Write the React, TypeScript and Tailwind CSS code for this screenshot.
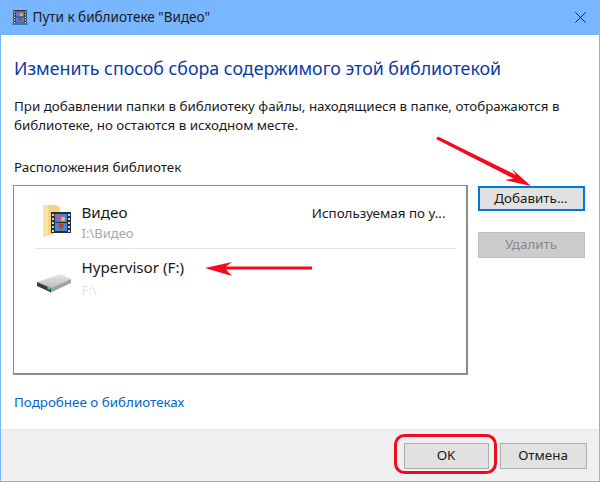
const font = "font-['Noto_Sans','Open_Sans',sans-serif]";

function FilmStrip({ className }: { className: string }) {
  return (
    <svg className={className} viewBox="0 0 20 21">
      <rect width="20" height="21" fill="#2b2e33" />
      <rect x="4" y="2" width="12" height="8" fill="#3f86e6" />
      <rect x="4" y="11" width="12" height="8" fill="#3f86e6" />
      <circle cx="8" cy="5" r="2.5" fill="#d94a86" />
      <circle cx="12" cy="7" r="2.2" fill="#e8c23a" />
      <circle cx="10" cy="14" r="2.6" fill="#c9382f" />
      <circle cx="10" cy="17.5" r="1.5" fill="#4a9e3a" />
      <path d="M1 2h2v2H1zM1 6h2v2H1zM1 10h2v2H1zM1 14h2v2H1zM1 18h2v2H1zM17 2h2v2h-2zM17 6h2v2h-2zM17 10h2v2h-2zM17 14h2v2h-2zM17 18h2v2h-2z" fill="#d8d8d8" />
    </svg>
  );
}

function VideoFolderIcon() {
  return (
    <div className="relative w-[28px] h-[32px]">
      <svg className="absolute left-0 top-0 w-[18px] h-[32px]" viewBox="0 0 18 32">
        <path d="M0 0h13l4 2v6l-6 1v20l-11 3z" fill="#f3d585" />
        <path d="M0 0h5v31l-5 1z" fill="#f8e3a6" />
      </svg>
      <FilmStrip className="absolute left-[8px] top-[7px] w-[20px] h-[21px]" />
    </div>
  );
}

function DriveIcon() {
  return (
    <svg className="w-[34px] h-[19px]" viewBox="0 0 34 19">
      <defs>
        <linearGradient id="driveTop" x1="0" y1="0" x2="0" y2="1">
          <stop offset="0" stopColor="#e6e6e6" />
          <stop offset="1" stopColor="#bdbdbd" />
        </linearGradient>
      </defs>
      <path d="M0 8 L24 0 L34 5 L14 14 Z" fill="url(#driveTop)" />
      <path d="M14 14 L34 5 L34 9 L14 18.5 Z" fill="#a0a0a0" />
      <path d="M0 8 L14 14 L14 18.5 L0 12 Z" fill="#3a3d40" />
      <rect x="10.5" y="13" width="3" height="2.5" fill="#3fd05f" />
    </svg>
  );
}

function Arrows() {
  return (
    <svg className="absolute inset-0 w-[600px] h-[482px] pointer-events-none" viewBox="0 0 600 482">
      <path d="M436 139 L438 136.5 L516 175 L512 169 L531 186 L505 180 L513.5 178.5 Z" fill="#f5091b" />
      <path d="M205 268 L232 262 L226 266.5 L312 266.5 L312 269.5 L226 269.5 L232 276 Z" fill="#f5091b" />
      <rect x="395.5" y="435.5" width="100" height="37" rx="9" fill="none" stroke="#ee0c1f" strokeWidth="3" />
    </svg>
  );
}

export default function App() {
  return (
    <div className={`${font} relative w-[600px] h-[482px] flex flex-col bg-white border-x-[1.5px] border-b-[1.5px] border-[#78b7ff] text-[#1a1a1a] overflow-hidden`}>
      {/* Title bar */}
      <div className="h-[35px] shrink-0 -mx-[1.5px] bg-[#78b7ff] flex items-center pl-[12px] pr-[15px]">
        <div className="relative w-[21px] h-[16px]">
          <FilmStrip className="absolute left-[1px] top-0 w-[14px] h-[14px]" />
          <div className="absolute left-0 top-[13px] w-[16px] h-[2px] rounded-full bg-[#2f78c8]" />
        </div>
        <span className="text-[13.5px]">Пути к библиотеке "Видео"</span>
        <svg className="ml-auto w-[11px] h-[11px]" viewBox="0 0 11 11">
          <path d="M0.3 0.3 L10.7 10.7 M10.7 0.3 L0.3 10.7" stroke="#1a1a2a" strokeWidth="1" />
        </svg>
      </div>

      {/* Content */}
      <div className="flex-1 flex flex-col pl-[11.5px] pr-[12.5px]">
        <h1 className="mt-[21px] ml-[1.5px] h-[24px] leading-[24px] text-[17.8px] text-[#0a3aa6] whitespace-nowrap">
          Изменить способ сбора содержимого этой библиотекой
        </h1>
        <p className="mt-[17px] ml-[1.5px] text-[13.35px] leading-[19px] whitespace-nowrap">
          При добавлении папки в библиотеку файлы, находящиеся в папке, отображаются в<br />
          библиотеке, но остаются в исходном месте.
        </p>
        <div className="mt-[22px] ml-[1.5px] h-[20px] text-[13.4px] leading-[20px]">Расположения библиотек</div>

        <div className="mt-[8px] flex items-start">
          <div className="w-[455px] h-[190px] border border-[#8c8c8c] border-b-2 border-r-2 pl-[21px] pr-[10px] flex flex-col">
            <div className="h-[63px] flex border-b border-[#e4e4e4]">
              <div className="w-[47px] pt-[19px] pl-[8px]">
                <VideoFolderIcon />
              </div>
              <div className="pt-[15px]">
                <div className="text-[15.2px] leading-[22px]">Видео</div>
                <div className="text-[13px] leading-[20px] text-[#a3a7ad]">I:\Видео</div>
              </div>
              <div className="ml-auto pt-[17px] pr-[10px] text-[13.4px] leading-[20px]">Используемая по у...</div>
            </div>
            <div className="flex">
              <div className="w-[47px] pt-[25px] pl-[2px]">
                <DriveIcon />
              </div>
              <div className="pt-[7px]">
                <div className="text-[15.2px] leading-[22px]">Hypervisor (F:)</div>
                <div className="text-[13px] leading-[20px] mt-[2px] text-[#e4e4e4]">F:\</div>
              </div>
            </div>
          </div>
          <div className="ml-[10px] mt-[1px] flex flex-col gap-[21px]">
            <button className="w-[107px] h-[25px] bg-[#e1e1e1] border-2 border-[#0078d7] text-[13.4px] leading-none">Добавить...</button>
            <button className="w-[107px] h-[26px] bg-[#cccccc] border border-[#bfbfbf] text-[13.4px] leading-none text-[#8a8a8a]">Удалить</button>
          </div>
        </div>

        <a className="mt-[17px] ml-[1.5px] h-[20px] text-[13.4px] leading-[20px] text-[#0066cc]">Подробнее о библиотеках</a>
      </div>

      {/* Footer */}
      <div className="h-[52.5px] shrink-0 bg-[#f0f0f0] border-t border-[#e4e4e4] flex items-start justify-end gap-[11px] pt-[13px] pr-[12.5px]">
        <button className="w-[85px] h-[26px] bg-[#e1e1e1] border border-[#adadad] text-[13.4px] leading-none">OK</button>
        <button className="w-[87px] h-[26px] bg-[#e1e1e1] border border-[#adadad] text-[13.4px] leading-none">Отмена</button>
      </div>

      <div className="absolute -left-[1.5px] top-0">
        <Arrows />
      </div>
    </div>
  );
}
